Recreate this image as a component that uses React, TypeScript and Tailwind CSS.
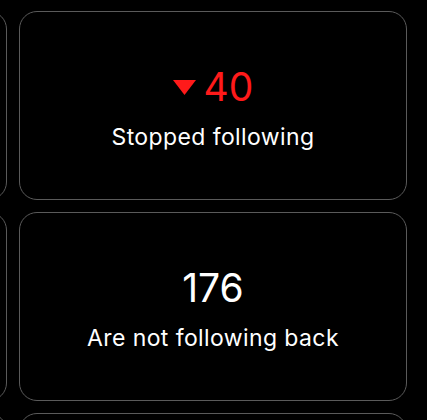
import React from "react";

type Stat = {
  value: string;
  label: string;
  drop?: boolean;
};

// right column of the stats grid; the left column is scrolled out of view
const rows: (Stat | null)[][] = [
  [null, { value: "40", label: "Stopped following", drop: true }],
  [null, { value: "176", label: "Are not following back" }],
  [null, null],
];

function StatCard({ stat }: { stat: Stat | null }) {
  return (
    <div className="w-[388px] h-[189px] shrink-0 rounded-[18px] border-[1.5px] border-[#5a5a5a] flex flex-col items-center justify-center pt-[4px]">
      {stat && (
        <>
          <div
            className={`flex items-center gap-2 text-[39px] leading-none ${
              stat.drop ? "text-[#ff1a1a]" : "text-white"
            }`}
          >
            {stat.drop && (
              <svg width="23" height="15" viewBox="0 0 23 15" className="mt-[2px]">
                <path d="M0 0 H23 L11.5 15 Z" fill="#ff1a1a" />
              </svg>
            )}
            <span>{stat.value}</span>
          </div>
          <p className="mt-[20px] text-[23px] leading-none tracking-[0.4px] text-white">
            {stat.label}
          </p>
        </>
      )}
    </div>
  );
}

export default function App() {
  return (
    <div
      className="w-[427px] h-[420px] overflow-hidden bg-black"
      style={{ fontFamily: "Inter, 'Noto Sans', sans-serif" }}
    >
      <div className="flex flex-col gap-3 pt-[11px] -ml-[381px]">
        {rows.map((row, i) => (
          <div key={i} className="flex gap-3">
            {row.map((s, j) => (
              <StatCard key={j} stat={s} />
            ))}
          </div>
        ))}
      </div>
    </div>
  );
}
